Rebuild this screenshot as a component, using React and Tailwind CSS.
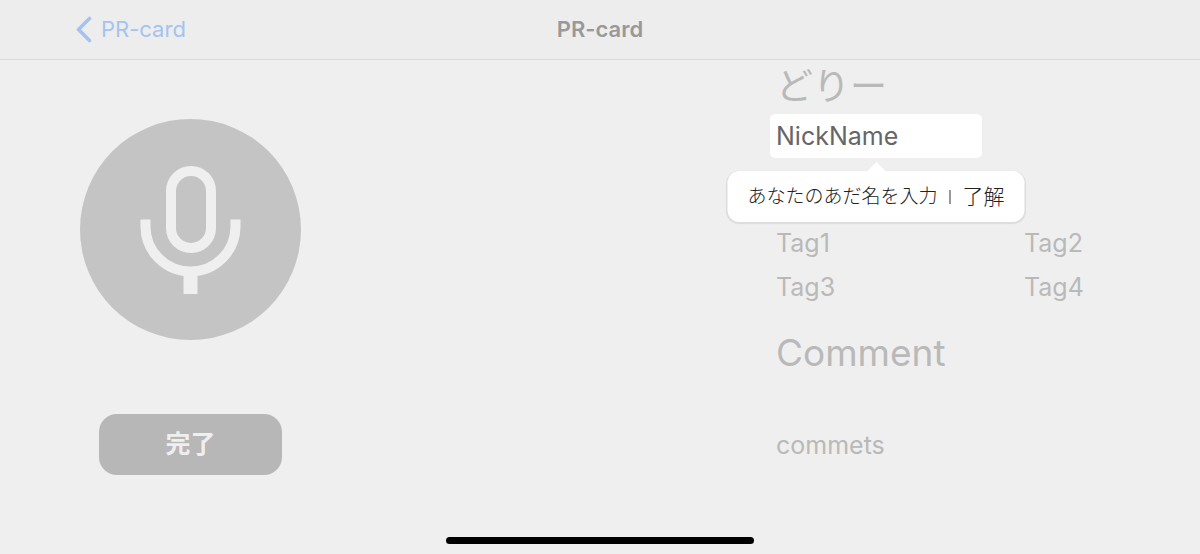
import { useState } from "react";

const TAGS = ["Tag1", "Tag2", "Tag3", "Tag4"];

function NavBar({ title, back }) {
  return (
    <header className="grid h-[60px] grid-cols-3 items-center border-b border-[#dadada] bg-[#ededed] px-[76px] pb-px text-[22px] leading-7">
      <a href="#back" className="flex items-center gap-2 text-[#a3c4f1]">
        <svg width="17" height="28" viewBox="0 0 17 28" fill="none">
          <path
            d="M13.500 3.500 2.500 14.500 13.500 25.500"
            stroke="currentColor"
            strokeWidth="3.600"
            strokeLinecap="round"
            strokeLinejoin="round"
          />
        </svg>
        {back}
      </a>
      <h1 className="text-center font-semibold text-[#999999]">{title}</h1>
    </header>
  );
}

function MicButton() {
  return (
    <button aria-label="mic" className="block rounded-full bg-[#c4c4c4]">
      <svg width="221" height="221" viewBox="0 0 221 221" fill="none">
        <rect x="91" y="52" width="40" height="77" rx="20" stroke="#efefef" strokeWidth="10" />
        <path d="M65.500 100.500v7a45 45 0 0 0 90 0v-7" stroke="#efefef" strokeWidth="10" />
        <path d="M110.500 155v20" stroke="#efefef" strokeWidth="14" />
      </svg>
    </button>
  );
}

function Coachmark({ text, action, onClose }) {
  return (
    <div className="absolute top-[57px] left-1/2 flex h-[51px] -translate-x-1/2 items-center rounded-xl bg-white px-5 whitespace-nowrap text-[#222222] shadow-[0_1px_1px_1px_rgba(0,0,0,0.08)]">
      <svg
        width="20"
        height="11"
        viewBox="0 0 20 11"
        className="absolute -top-[10px] left-1/2 -translate-x-1/2"
      >
        <path d="M0 11 10 1l10 10z" fill="#ffffff" />
      </svg>
      <span className="text-[19px] font-light">{text}</span>
      <span className="mx-3 h-[14px] w-px bg-[#333333]" />
      <button onClick={onClose} className="text-[21px] font-light">
        {action}
      </button>
    </div>
  );
}

export default function App() {
  const [nickname, setNickname] = useState("NickName");
  const [showHint, setShowHint] = useState(true);

  return (
    <div className="flex min-h-screen flex-col bg-[#efefef] font-['Inter','Noto_Sans_CJK_JP',sans-serif]">
      <NavBar title="PR-card" back="PR-card" />

      <main className="flex flex-1 justify-between pr-[70px] pl-20">
        <section className="flex flex-col items-center pt-[59px]">
          <MicButton />
          <button className="mt-[74px] h-[61px] w-[183px] rounded-[18px] bg-[#b7b7b7] text-[25px] font-bold text-[#efefef]">
            完了
          </button>
        </section>

        <section className="w-[360px] text-[25px] leading-[44px] text-[#b9b9b9]">
          <h2 className="pl-[6px] text-[37px] leading-[54px]">どりー</h2>

          {/* highlighted field with its hint below */}
          <div className="relative w-[212px]">
            <input
              aria-label="NickName"
              value={nickname}
              onChange={(e) => setNickname(e.target.value)}
              className="block h-[44px] w-full rounded-[5px] bg-white px-[6px] text-[25px] text-[#666666] outline-none"
            />
            {showHint ? (
              <Coachmark
                text="あなたのあだ名を入力"
                action="了解"
                onClose={() => setShowHint(false)}
              />
            ) : null}
          </div>

          <ul className="mt-[63px] grid grid-cols-[248px_1fr] pl-[6px]">
            {TAGS.map((tag) => (
              <li key={tag}>{tag}</li>
            ))}
          </ul>

          <h3 className="mt-[22px] pl-[6px] text-[37px]">Comment</h3>
          <p className="mt-12 pl-[6px]">commets</p>
        </section>
      </main>

      <div className="mx-auto mb-[10px] h-[7px] w-[308px] rounded-full bg-black" />
    </div>
  );
}
